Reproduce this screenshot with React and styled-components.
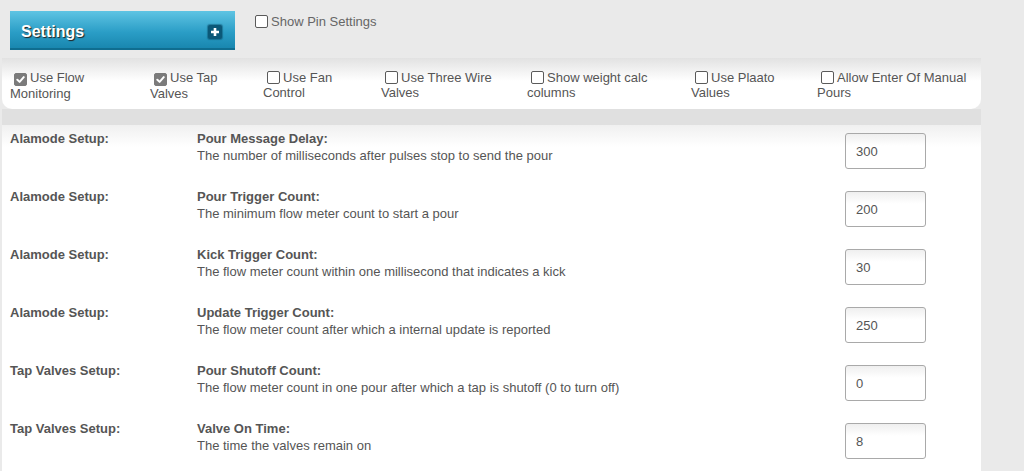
import React from "react";
import styled, { createGlobalStyle } from "styled-components";

const GlobalStyle = createGlobalStyle`
  html, body {
    margin: 0;
    padding: 0;
    background: #eaeaea;
    font-family: "Liberation Sans", Arial, sans-serif;
    color: #555;
  }
`;

const options = [
  { first: "Use Flow", second: "Monitoring", checked: true, width: 140 },
  { first: "Use Tap", second: "Valves", checked: true, width: 113 },
  { first: "Use Fan", second: "Control", checked: false, width: 118 },
  { first: "Use Three Wire", second: "Valves", checked: false, width: 146 },
  { first: "Show weight calc", second: "columns", checked: false, width: 164 },
  { first: "Use Plaato", second: "Values", checked: false, width: 126 },
  { first: "Allow Enter Of Manual", second: "Pours", checked: false, width: 160 },
];

const settings = [
  {
    group: "Alamode Setup:",
    title: "Pour Message Delay:",
    text: "The number of milliseconds after pulses stop to send the pour",
    value: "300",
  },
  {
    group: "Alamode Setup:",
    title: "Pour Trigger Count:",
    text: "The minimum flow meter count to start a pour",
    value: "200",
  },
  {
    group: "Alamode Setup:",
    title: "Kick Trigger Count:",
    text: "The flow meter count within one millisecond that indicates a kick",
    value: "30",
  },
  {
    group: "Alamode Setup:",
    title: "Update Trigger Count:",
    text: "The flow meter count after which a internal update is reported",
    value: "250",
  },
  {
    group: "Tap Valves Setup:",
    title: "Pour Shutoff Count:",
    text: "The flow meter count in one pour after which a tap is shutoff (0 to turn off)",
    value: "0",
  },
  {
    group: "Tap Valves Setup:",
    title: "Valve On Time:",
    text: "The time the valves remain on",
    value: "8",
  },
];

const Checkbox = ({ checked }) => (
  <Box checked={checked}>
    {checked && (
      <svg width="9" height="9" viewBox="0 0 10 10">
        <path
          d="M1.5 5.2 L4 7.6 L8.6 2.4"
          fill="none"
          stroke="#fff"
          strokeWidth="2.2"
          strokeLinecap="round"
          strokeLinejoin="round"
        />
      </svg>
    )}
  </Box>
);

const App = () => {
  return (
    <>
      <GlobalStyle />
      <Header>
        <TitleBar>
          <Title>Settings</Title>
          <PlusButton>
            <svg width="10" height="10" viewBox="0 0 10 10">
              <path d="M5 1 V9 M1 5 H9" stroke="#fff" strokeWidth="2.6" />
            </svg>
          </PlusButton>
        </TitleBar>
        <PinToggle>
          <Checkbox checked={false} />
          Show Pin Settings
        </PinToggle>
      </Header>
      <Page>
        <OptionsPanel>
          {options.map((opt) => (
            <OptionItem key={opt.first} width={opt.width}>
              <Checkbox checked={opt.checked} />
              {opt.first}
              <br />
              {opt.second}
            </OptionItem>
          ))}
        </OptionsPanel>
        <Divider />
        <SettingsList>
          {settings.map((s) => (
            <SettingRow key={s.title}>
              <Group>{s.group}</Group>
              <Description>
                <strong>{s.title}</strong>
                <br />
                {s.text}
              </Description>
              <ValueInput defaultValue={s.value} />
            </SettingRow>
          ))}
        </SettingsList>
      </Page>
    </>
  );
};

const Header = styled.div`
  display: flex;
  align-items: flex-start;
  padding: 11px 0 0 10px;
  height: 47px;
  box-sizing: border-box;
`;

const TitleBar = styled.div`
  width: 225px;
  height: 39px;
  flex-shrink: 0;
  box-sizing: border-box;
  display: flex;
  align-items: center;
  justify-content: space-between;
  padding: 2px 13px 0 11px;
  background: linear-gradient(#5fc4e3, #2a9dc6 55%, #1784ac);
  box-shadow: inset 0 -2px 0 #0f6d90;
`;

const Title = styled.span`
  color: #fff;
  font-weight: bold;
  font-size: 16px;
  text-shadow: 1px 1px 1px #222;
`;

const PlusButton = styled.span`
  width: 14px;
  height: 14px;
  border-radius: 2px;
  background: #0b5878;
  box-shadow: 0 0 1px 1px rgba(10, 80, 110, 0.5);
  display: flex;
  align-items: center;
  justify-content: center;
  margin-top: 1px;
`;

const PinToggle = styled.label`
  display: flex;
  align-items: center;
  margin: 3px 0 0 16px;
  font-size: 13px;
  line-height: 15px;
  color: #666;
`;

const Box = styled.span`
  display: inline-flex;
  align-items: center;
  justify-content: center;
  box-sizing: border-box;
  width: 13px;
  height: 13px;
  margin: 0 3px 0 4px;
  border-radius: 2px;
  vertical-align: -2px;
  background: ${(p) => (p.checked ? "#7b7b7b" : "#fff")};
  border: 1px solid ${(p) => (p.checked ? "#7b7b7b" : "#5a5a5a")};
`;

const Page = styled.div`
  width: 979px;
  margin-left: 2px;
  margin-top: 11px;
`;

const OptionsPanel = styled.div`
  display: flex;
  padding: 12px 8px 8px;
  background: linear-gradient(#e2e2e2, #ffffff 45%);
  border-radius: 0 0 10px 10px;
`;

const OptionItem = styled.div`
  width: ${(p) => p.width}px;
  flex-shrink: 0;
  font-size: 13px;
  line-height: 15px;
  color: #555;
  white-space: nowrap;
`;

const Divider = styled.div`
  height: 16px;
  background: #e0e0e0;
`;

const SettingsList = styled.div`
  background: linear-gradient(#f0f0f0, #ffffff 22px);
  padding-left: 8px;
  min-height: 347px;
`;

const SettingRow = styled.div`
  display: grid;
  grid-template-columns: 187px 648px 136px;
  align-items: start;
  height: 58px;
  box-sizing: border-box;
  padding-top: 5px;
  font-size: 13px;
  line-height: 17px;
`;

const Group = styled.div`
  font-weight: bold;
  color: #555;
`;

const Description = styled.div`
  color: #555;
`;

const ValueInput = styled.input`
  width: 81px;
  height: 36px;
  box-sizing: border-box;
  margin: 3px 0 0;
  padding: 0 10px;
  border: 1px solid #a9a9a9;
  border-radius: 3px;
  background: linear-gradient(#efefef, #ffffff 35%);
  font-family: "Liberation Sans", Arial, sans-serif;
  font-size: 13px;
  color: #555;
  outline: none;
`;

export default App;
